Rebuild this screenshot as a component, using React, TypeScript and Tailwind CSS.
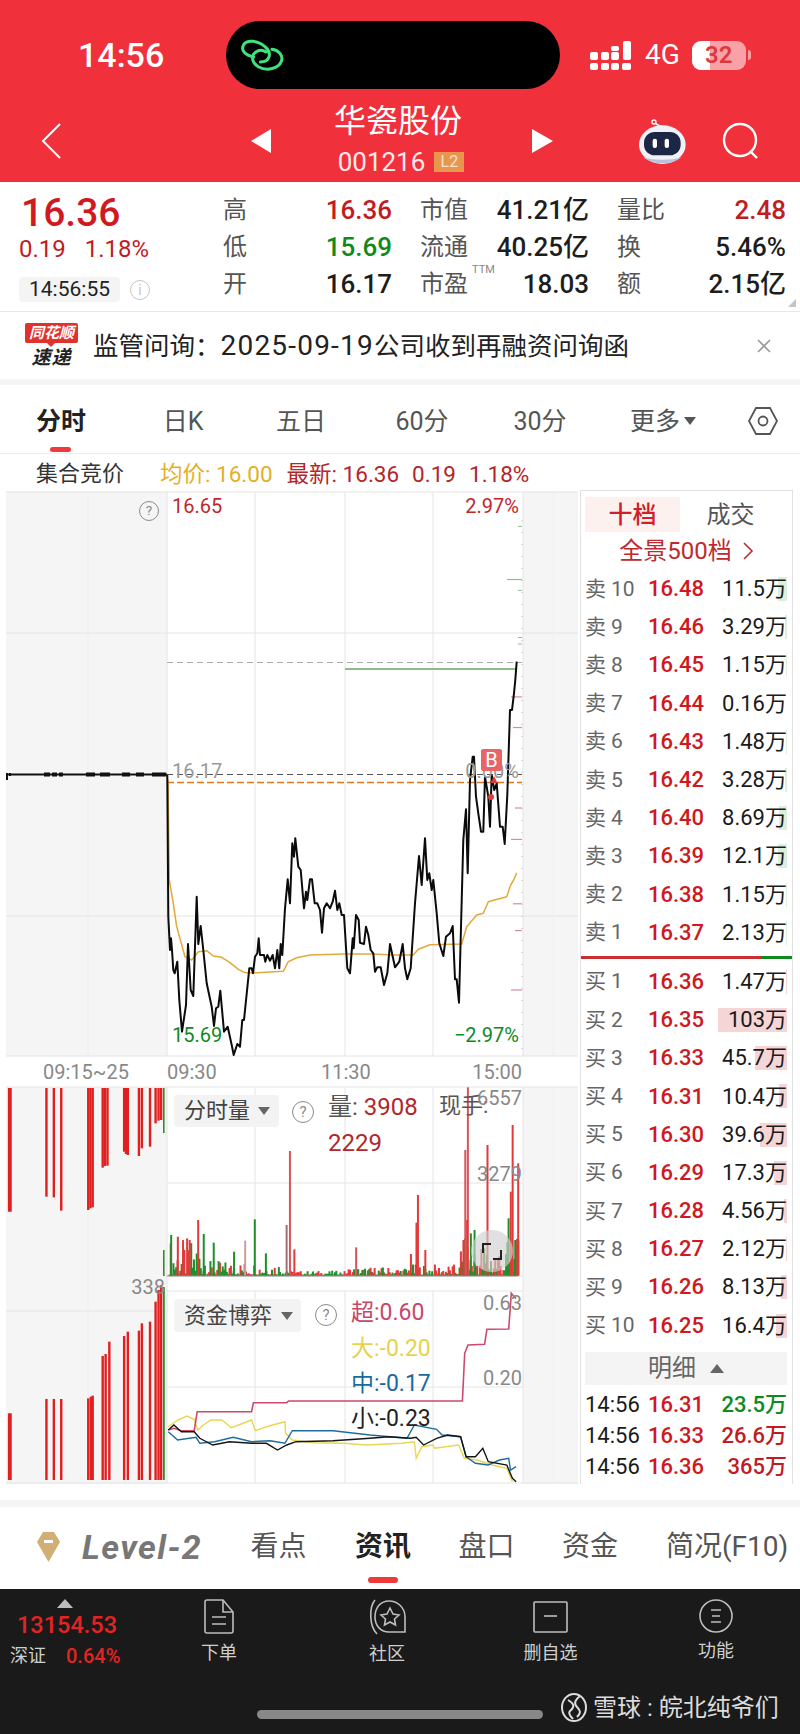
import React from 'react';

type Pt = [number, number];

const toLine = (pts: Pt[], fx: (x: number) => number, fy: (y: number) => number) =>
  pts.map(([x, y]) => `${fx(x).toFixed(1)},${fy(y).toFixed(1)}`).join(' ');

// traced from the chart: price and average lines
const priceTrace: Pt[] = [
  [22,405],[25,830],[30,930],[33,895],[36,930],[40,990],[44,1000],[52,965],[58,1080],[66,1175],[78,1095],[84,912],[92,1050],[100,1068],[110,770],[115,912],[122,858],[130,930],[140,1030],[155,1100],[162,1158],[168,1105],[175,1100],[181,1052],[192,1175],[203,1160],[215,1215],[221,1245],[232,1212],[240,1220],[247,1140],[252,1140],[268,985],[275,985],[279,1000],[285,950],[292,940],[296,895],[300,945],[312,945],[316,965],[322,945],[330,962],[338,945],[345,985],[352,930],[358,985],[362,912],[367,945],[375,805],[383,718],[390,790],[397,610],[402,650],[406,595],[415,680],[422,690],[432,805],[438,755],[442,780],[450,718],[456,718],[464,790],[472,790],[480,810],[486,878],[492,805],[500,790],[510,805],[518,785],[525,752],[532,810],[538,790],[545,825],[552,825],[562,985],[570,1000],[578,895],[581,925],[588,825],[596,840],[600,908],[612,912],[618,860],[625,885],[632,930],[640,940],[645,995],[652,982],[662,982],[672,1035],[682,1000],[690,912],[705,982],[718,965],[728,912],[735,985],[742,1018],[752,985],[765,790],[777,648],[785,735],[795,595],[802,720],[808,700],[815,750],[820,720],[830,820],[838,910],[850,948],[858,890],[870,880],[878,858],[885,1018],[890,1018],[897,1088],[910,600],[918,508],[923,700],[930,420],[938,350],[942,350],[948,470],[955,520],[963,575],[970,575],[975,410],[985,470],[990,560],[995,405],[1003,450],[1010,430],[1020,560],[1028,560],[1034,612],[1042,465],[1050,210],[1056,210],[1062,160],[1066,120],[1070,65],
];
const avgTrace: Pt[] = [
  [24,420],[28,720],[40,790],[50,860],[75,950],[95,960],[115,935],[140,932],[160,948],[185,952],[210,968],[235,988],[255,998],[290,998],[370,994],[385,965],[410,953],[450,945],[550,942],[640,942],[700,945],[760,945],[775,928],[810,914],[905,912],[920,860],[950,825],[970,820],[985,785],[1040,770],[1052,735],[1062,718],[1070,698],
];
const superTrace: Pt[] = [[455,1050],[470,1045],[490,1052],[525,1052],[533,995],[680,995],[685,968],[775,968],[780,963],[1250,963],[1256,820],[1265,795],[1310,793],[1316,748],[1375,747],[1382,640],[1390,650],[1395,655]];
const bigTrace: Pt[] = [[455,1040],[480,1020],[505,1008],[525,1018],[535,1050],[550,1035],[570,1020],[600,1020],[625,1043],[645,1035],[680,1020],[690,1052],[720,1040],[770,1025],[772,1060],[790,1080],[850,1088],[930,1090],[990,1095],[1085,1090],[1120,1085],[1125,1135],[1140,1100],[1170,1095],[1175,1105],[1240,1095],[1255,1135],[1290,1140],[1330,1155],[1370,1165],[1385,1205]];
const midTrace: Pt[] = [[455,1055],[480,1080],[530,1072],[540,1090],[580,1085],[630,1072],[680,1085],[730,1082],[770,1090],[790,1052],[900,1052],[1000,1065],[1100,1075],[1120,1035],[1180,1048],[1195,1065],[1245,1070],[1260,1130],[1285,1150],[1320,1155],[1350,1140],[1375,1135],[1380,1170],[1395,1160]];
const smallTrace: Pt[] = [[455,1050],[470,1035],[490,1055],[525,1055],[540,1075],[575,1095],[620,1085],[680,1090],[720,1090],[750,1110],[775,1095],[800,1085],[900,1082],[1000,1075],[1050,1070],[1110,1075],[1125,1072],[1145,1095],[1180,1075],[1210,1065],[1245,1070],[1260,1130],[1285,1130],[1305,1105],[1320,1145],[1370,1155],[1385,1195],[1395,1205]];

const frac = (n: number) => n - Math.floor(n);
const rnd = (i: number) => frac(Math.sin(i * 12.9898) * 43758.5453);

const RED = '#e23a3a';
const GREEN = '#1f8f2b';

const volBars: { x: number; top: number; c: string }[] = [];
for (let i = 0; i < 256; i++) {
  const x = 455 + i * 3.7;
  const cap = x < 560 ? 110 : x < 780 ? 42 : x < 930 ? 12 : x < 1100 ? 24 : x < 1240 ? 32 : 110;
  const r = rnd(i);
  volBars.push({ x, top: 587 - cap * r * r - 3, c: rnd(i + 500) < 0.55 ? GREEN : RED });
}
const spikes: [number, number, string][] = [
  [781,213,'#d9535a'],[772,435,'#a07070'],[1127,345,RED],[1123,428,RED],[960,502,'#d9535a'],[1262,22,'#d9535a'],[1255,210,'#d9535a'],[1315,195,RED],[1383,135,RED],[1378,335,RED],[1398,250,RED],[1250,480,RED],[1260,420,RED],[533,420,RED],[478,470,RED],[510,480,RED],[686,418,GREEN],[460,465,GREEN],[548,462,GREEN],[575,488,GREEN],[630,515,GREEN],[716,520,GREEN],[1280,450,GREEN],[1270,460,GREEN],[1372,415,GREEN],[1390,480,GREEN],[793,508,RED],[1108,522,RED],[1147,510,RED],[660,482,'#c9a0a0'],
];
spikes.forEach(([x, top, c]) => volBars.push({ x, top, c }));

// red columns in the auction zone, hanging from the top / standing on the bottom
const auctionVol: [number, number][] = [[24,395],[28,395],[125,350],[145,352],[165,392],[238,390],[244,385],[250,382],[277,263],[283,258],[290,257],[335,215],[340,222],[345,225],[375,228],[383,205],[405,200],[420,130],[428,122],[435,120]];
const auctionFund: [number, number][] = [[24,1000],[28,1000],[125,957],[145,957],[165,957],[238,955],[245,950],[250,947],[277,828],[285,822],[295,785],[335,768],[345,755],[375,752],[383,730],[405,725],[420,665],[428,630],[435,615]];

const tickRows = [540, 620, 830, 912, 1080, 1150, 1305];
const greenTicks = [95, 262, 385, 402];

const zx4 = (x: number) => x / 2.703;
const zy4 = (y: number) => 1080 + y / 3;

function ChartDrawing() {
  const z8x = (x: number) => 160 + x / 3;
  const z8y = (y: number) => 640 + y / 3;
  return (
    <svg className="absolute inset-0" width="581" height="994" viewBox="0 490 581 994" fill="none">
      <rect x="6" y="492" width="161" height="564" fill="#f5f5f5" />
      <rect x="523" y="492" width="55" height="564" fill="#f5f5f5" />
      <rect x="6" y="1087" width="161" height="397" fill="#f5f5f5" />
      <rect x="523" y="1087" width="55" height="397" fill="#f5f5f5" />

      {/* grid */}
      <g stroke="#e4e4e4" strokeWidth="1">
        <path d="M6 492H578M6 633H578M6 916H578M6 1056H578M6 1087H578M167 1183H523M167 1276H523M167 1291H523M6 1311H167M167 1387H523M6 1483H578" />
        <path d="M167 492V1056M255 492V1056M345 492V1056M433 492V1056M523 492V1056M167 1087V1483M255 1087V1276M345 1087V1276M433 1087V1276M523 1087V1483M255 1291V1483M345 1291V1483M433 1291V1483" />
        <path d="M88 492V1056M88 1087V1483M553 492V1056M553 1087V1483" stroke="#eeeeee" />
      </g>

      {/* right edge ticks */}
      <g stroke="#d98c9a" strokeWidth="1.2">
        {tickRows.map((y, i) => (
          <path key={y} d={`M${511 + (i % 3) * 2} ${490 + y / 2.61}H522`} />
        ))}
      </g>
      <path d="M507 579.5H522" stroke="#8fbf8f" strokeWidth="1.2" />
      <g stroke="#8fbf8f" strokeWidth="1">
        {greenTicks.map((y) => (
          <path key={y} d={`M518 ${490 + y / 2.61}H522`} />
        ))}
      </g>
      <path d="M522 520V1056" stroke="#b8b8b8" strokeWidth="1" strokeDasharray="1 11" />

      {/* reference lines */}
      <path d="M167 662.5H522" stroke="#aaaaaa" strokeWidth="1" strokeDasharray="6 4" />
      <path d="M345 669H516" stroke="#8fbb8a" strokeWidth="2" />
      <path d="M167 774.5H522" stroke="#555555" strokeWidth="1" strokeDasharray="6 4" />
      <path d="M167 782.5H522" stroke="#e07820" strokeWidth="1.6" strokeDasharray="7 3" />

      {/* pre-open flat line */}
      <path d="M7 774.5H167" stroke="#111111" strokeWidth="2" />
      <path d="M7 773V780M10 773V776" stroke="#111111" strokeWidth="2" />
      <path d="M44 774.5h6M52 774.5h5M59 774.5h4M86 774.5h9M100 774.5h10M122 774.5h8M136 774.5h8M152 774.5h14" stroke="#111111" strokeWidth="4" />

      <polyline points={toLine(avgTrace, z8x, z8y)} stroke="#e3a93b" strokeWidth="1.5" strokeLinejoin="round" />
      <polyline points={toLine(priceTrace, z8x, z8y)} stroke="#0b0b0b" strokeWidth="2" strokeLinejoin="round" />

      <circle cx="491" cy="797" r="3" fill="#e23a3a" />
      <path d="M494 776l3.5 7h-7z" fill="#e23a3a" />

      {/* volume */}
      {auctionVol.map(([x, b]) => (
        <rect key={x} x={zx4(x) - 1} y="1088" width="2.4" height={zy4(b) - 1088} fill="#e01f1f" />
      ))}
      <rect x="163" y="1088" width="1.6" height="45" fill="#2f8f2f" />
      <rect x="163" y="1250" width="1.6" height="26" fill="#2f8f2f" />
      {volBars.map((b, i) => (
        <rect key={i} x={zx4(b.x)} y={zy4(b.top)} width="2" height={zy4(587) - zy4(b.top)} fill={b.c} />
      ))}
      <path d="M167 1276H518" stroke="#777777" strokeWidth="0.8" />

      {/* fund flow */}
      {auctionFund.map(([x, t]) => (
        <rect key={x} x={zx4(x) - 1} y={zy4(t)} width="2.4" height={zy4(1200) - zy4(t)} fill="#e01f1f" />
      ))}
      <rect x="163" y="1287" width="1.8" height="193" fill="#2f8f2f" />
      <polyline points={toLine(bigTrace, zx4, zy4)} stroke="#e8d750" strokeWidth="1.4" />
      <polyline points={toLine(superTrace, zx4, zy4)} stroke="#cb4a6c" strokeWidth="1.6" />
      <polyline points={toLine(midTrace, zx4, zy4)} stroke="#1f6c9e" strokeWidth="1.4" />
      <polyline points={toLine(smallTrace, zx4, zy4)} stroke="#151515" strokeWidth="1.4" />

      {/* expand button */}
      <circle cx="492" cy="1251" r="21" fill="#cfcfcf" fillOpacity="0.65" />
      <path d="M483 1253v-9h8M501 1250v9h-8" stroke="#222222" strokeWidth="2" />
    </svg>
  );
}

function Help({ className, size = 20 }: { className: string; size?: number }) {
  return (
    <span
      className={`absolute flex items-center justify-center rounded-full border-[1.5px] border-[#8a8a8a] text-[#8a8a8a] ${className}`}
      style={{ width: size, height: size, fontSize: size * 0.68 }}
    >
      ?
    </span>
  );
}

function ChartPanel() {
  return (
    <div className="relative h-[994px] w-[580px] shrink-0 text-[20px] leading-none">
      <ChartDrawing />
      <Help className="left-[139px] top-[11px]" />
      <span className="absolute left-[172px] top-[6px] text-[#c0272d]">16.65</span>
      <span className="absolute right-[61px] top-[6px] text-[#c0272d]">2.97%</span>
      <span className="absolute left-[172px] top-[271px] text-[#999]">16.17</span>
      <span className="absolute right-[61px] top-[271px] text-[#999]">0.00%</span>
      <span className="absolute left-[481px] top-[259px] flex h-[22px] w-[21px] items-center justify-center rounded-[2px] bg-[#e86565] text-[20px] text-white">B</span>
      <span className="absolute left-[172px] top-[535px] text-[#0f8a1c]">15.69</span>
      <span className="absolute right-[61px] top-[535px] text-[#0f8a1c]">−2.97%</span>

      <span className="absolute left-[43px] top-[572px] text-[#888]">09:15~25</span>
      <span className="absolute left-[167px] top-[572px] text-[#888]">09:30</span>
      <span className="absolute left-[321px] top-[572px] text-[#888]">11:30</span>
      <span className="absolute right-[58px] top-[572px] text-[#888]">15:00</span>

      <div className="absolute left-[174px] top-[605px] flex h-[32px] w-[105px] items-center gap-[8px] rounded-[4px] bg-[#f3f3f3] pl-[10px] text-[22px] text-[#444]">
        分时量<span className="h-0 w-0 border-x-[6px] border-t-[8px] border-x-transparent border-t-[#666]" />
      </div>
      <Help className="left-[292px] top-[611px]" size={22} />
      <span className="absolute left-[328px] top-[605px] text-[24px] text-[#555]">量: <span className="text-[#b3262b]">3908</span></span>
      <span className="absolute left-[439px] top-[605px] text-[22px] text-[#555]">现手:</span>
      <span className="absolute left-[328px] top-[641px] text-[24px] text-[#b3262b]">2229</span>
      <span className="absolute right-[58px] top-[598px] text-[#888]">6557</span>
      <span className="absolute right-[58px] top-[674px] text-[#888]">3279</span>
      <span className="absolute right-[415px] top-[787px] text-[#888]">338</span>

      <div className="absolute left-[174px] top-[809px] flex h-[33px] w-[127px] items-center gap-[9px] rounded-[4px] bg-[#f3f3f3] pl-[10px] text-[22px] text-[#444]">
        资金博弈<span className="h-0 w-0 border-x-[6px] border-t-[8px] border-x-transparent border-t-[#666]" />
      </div>
      <Help className="left-[315px] top-[814px]" size={22} />
      <span className="absolute left-[351px] top-[811px] text-[23px] text-[#c8466a]">超:0.60</span>
      <span className="absolute left-[351px] top-[847px] text-[23px] text-[#e6d24e]">大:-0.20</span>
      <span className="absolute left-[351px] top-[882px] text-[23px] text-[#1a6aa0]">中:-0.17</span>
      <span className="absolute left-[351px] top-[917px] text-[23px] text-[#222]">小:-0.23</span>
      <span className="absolute right-[58px] top-[803px] text-[#888]">0.63</span>
      <span className="absolute right-[58px] top-[878px] text-[#888]">0.20</span>
    </div>
  );
}

type Level = { label: string; no: string; price: string; qty: string; bar?: number };

const asks: Level[] = [
  { label: '卖', no: '10', price: '16.48', qty: '11.5万', bar: 9 },
  { label: '卖', no: '9', price: '16.46', qty: '3.29万', bar: 2 },
  { label: '卖', no: '8', price: '16.45', qty: '1.15万', bar: 1 },
  { label: '卖', no: '7', price: '16.44', qty: '0.16万' },
  { label: '卖', no: '6', price: '16.43', qty: '1.48万', bar: 1 },
  { label: '卖', no: '5', price: '16.42', qty: '3.28万', bar: 2 },
  { label: '卖', no: '4', price: '16.40', qty: '8.69万', bar: 8 },
  { label: '卖', no: '3', price: '16.39', qty: '12.1万', bar: 9 },
  { label: '卖', no: '2', price: '16.38', qty: '1.15万', bar: 1 },
  { label: '卖', no: '1', price: '16.37', qty: '2.13万', bar: 1 },
];
const bids: Level[] = [
  { label: '买', no: '1', price: '16.36', qty: '1.47万', bar: 1 },
  { label: '买', no: '2', price: '16.35', qty: '103万', bar: 69 },
  { label: '买', no: '3', price: '16.33', qty: '45.7万', bar: 32 },
  { label: '买', no: '4', price: '16.31', qty: '10.4万', bar: 8 },
  { label: '买', no: '5', price: '16.30', qty: '39.6万', bar: 27 },
  { label: '买', no: '6', price: '16.29', qty: '17.3万', bar: 13 },
  { label: '买', no: '7', price: '16.28', qty: '4.56万', bar: 3 },
  { label: '买', no: '8', price: '16.27', qty: '2.12万', bar: 1 },
  { label: '买', no: '9', price: '16.26', qty: '8.13万', bar: 6 },
  { label: '买', no: '10', price: '16.25', qty: '16.4万', bar: 11 },
];
const ticks = [
  { time: '14:56', price: '16.31', qty: '23.5万', color: 'text-[#0f8a1c]' },
  { time: '14:56', price: '16.33', qty: '26.6万', color: 'text-[#c01c22]' },
  { time: '14:56', price: '16.36', qty: '365万', color: 'text-[#c01c22]' },
];

function LevelRow({ level, tone }: { level: Level; tone: 'ask' | 'bid' }) {
  return (
    <div className="relative flex h-[38.2px] items-center text-[21px] leading-none">
      {level.bar ? (
        <span
          className={`absolute right-0 top-[7px] h-[24px] ${tone === 'ask' ? 'bg-[#dcefdc]' : 'bg-[#f6d5d6]'}`}
          style={{ width: level.bar }}
        />
      ) : null}
      <span className="relative w-[63px] text-[#666]">
        {level.label}
        <span className="ml-[5px]">{level.no}</span>
      </span>
      <span className="relative text-[22px] font-medium text-[#cf1820]">{level.price}</span>
      <span className="relative ml-auto text-[22px] text-[#1a1a1a]">{level.qty}</span>
    </div>
  );
}

function DepthPanel() {
  return (
    <div className="flex h-[994px] w-[213px] shrink-0 flex-col border-x border-t border-[#e2e2e2] pt-[6px]">
      <div className="flex h-[35px] pl-[4px] pr-[5px] text-[24px] leading-none">
        <span className="flex w-[95px] items-center justify-center bg-[#fdf1ef] font-medium text-[#cf2027]">十档</span>
        <span className="flex flex-1 items-center justify-center pr-[6px] text-[#555]">成交</span>
      </div>
      <div className="flex h-[38px] items-center justify-center gap-[10px] text-[24px] leading-none text-[#bd2a30]">
        全景500档
        <svg width="12" height="20" viewBox="0 0 12 20" fill="none"><path d="M2 2l8 8-8 8" stroke="#bd2a30" strokeWidth="1.6" /></svg>
      </div>
      <div className="pl-[4px] pr-[5px]">
        {asks.map((l) => <LevelRow key={l.no} level={l} tone="ask" />)}
      </div>
      <div className="mt-[4px] flex h-[3px] shrink-0">
        <span className="w-[180px] bg-[#c9302f]" />
        <span className="flex-1 bg-[#0f8a1c]" />
      </div>
      <div className="mt-[4px] pl-[4px] pr-[5px]">
        {bids.map((l) => <LevelRow key={l.no} level={l} tone="bid" />)}
      </div>
      <div className="ml-[4px] mr-[5px] mt-[7px] flex h-[33px] shrink-0 items-center justify-center gap-[14px] bg-[#f4f4f4] text-[24px] leading-none text-[#666]">
        明细
        <span className="h-0 w-0 border-x-[7px] border-b-[9px] border-x-transparent border-b-[#666]" />
      </div>
      <div className="mt-[5px] pl-[4px] pr-[5px]">
        {ticks.map((t) => (
          <div key={t.qty} className="flex h-[31px] items-center text-[22px] leading-none">
            <span className="w-[63px] text-[#1a1a1a]">{t.time}</span>
            <span className="font-medium text-[#cf1820]">{t.price}</span>
            <span className={`ml-auto font-medium ${t.color}`}>{t.qty}</span>
          </div>
        ))}
      </div>
    </div>
  );
}

function StatRow({ label, value, color = 'text-[#1d1d1d]' }: { label: React.ReactNode; value: string; color?: string }) {
  return (
    <div className="flex h-[37px] items-center justify-between leading-none">
      <span className="relative text-[24px] text-[#555]">{label}</span>
      <span className={`text-[26px] font-medium ${color}`}>{value}</span>
    </div>
  );
}

function SignalIcon() {
  return (
    <svg width="42" height="29" viewBox="0 0 42 29" fill="#fff">
      {[0, 11, 21].map((x) => (
        <g key={x}>
          <rect x={x} y="22" width="8" height="7" rx="2" />
          <rect x={x} y="11" width="8" height="8" rx="2" />
        </g>
      ))}
      <rect x="21" y="5" width="8" height="5" rx="2" />
      <rect x="32" y="22" width="9" height="7" rx="2" />
      <rect x="33" y="0" width="8" height="19" rx="2" />
    </svg>
  );
}

function RobotIcon() {
  return (
    <svg width="66" height="54" viewBox="0 0 198 162" fill="none">
      <circle cx="72" cy="24" r="6" stroke="#fff" strokeWidth="4" />
      <path d="M76 28c8 6 14 8 20 8" stroke="#fff" strokeWidth="5" />
      <ellipse cx="97" cy="92" rx="70" ry="58" fill="#f1f2f8" />
      <path d="M40 130c30 24 84 24 114 0-30 10-84 10-114 0z" fill="#b9c3dd" />
      <rect x="42" y="54" width="110" height="70" rx="32" fill="#1c2745" />
      <rect x="68" y="74" width="13" height="28" rx="6" fill="#fff" />
      <rect x="104" y="74" width="13" height="28" rx="6" fill="#fff" />
    </svg>
  );
}

function Header() {
  return (
    <header className="bg-[#f0313b] text-white">
      <div className="flex h-[100px] items-center">
        <span className="ml-[78px] w-[148px] pt-[10px] text-[34px] font-medium leading-none">14:56</span>
        <div className="mb-[11px] mt-[21px] flex h-[68px] w-[334px] items-center rounded-[34px] bg-black pl-[6px]">
          <svg width="60" height="46" viewBox="0 0 180 138" fill="none" stroke="#3fe37c" strokeWidth="9" strokeLinecap="round">
            <path d="M65 75C40 70 25 55 35 38 45 22 80 25 100 45 120 62 115 90 85 90" />
            <path d="M120 52C140 55 155 70 148 88 140 110 105 118 80 105 58 92 55 68 75 58 85 52 95 55 102 60" />
          </svg>
        </div>
        <div className="ml-[30px] mt-[10px]"><SignalIcon /></div>
        <span className="ml-[13px] mt-[10px] text-[28px] leading-none">4G</span>
        <div className="relative ml-[12px] mt-[10px] flex h-[29px] w-[54px] items-center justify-center overflow-hidden rounded-[9px] bg-white/55 text-[24px] font-semibold leading-none text-[#e0363d]">
          <span className="absolute inset-y-0 left-0 w-[18px] bg-white" />
          <span className="relative">32</span>
        </div>
        <span className="ml-[2px] mt-[10px] h-[10px] w-[3px] rounded-r bg-white/55" />
      </div>
      <div className="flex h-[82px] items-center">
        <svg className="ml-[41px]" width="21" height="36" viewBox="0 0 21 36" fill="none"><path d="M19 1L2 18l17 17" stroke="#fff" strokeWidth="2" /></svg>
        <span className="ml-[189px] h-0 w-0 border-y-[12px] border-r-[20px] border-y-transparent border-r-white" />
        <div className="flex w-[261px] flex-col items-center pr-[7px] leading-none">
          <span className="text-[32px] leading-[32px]">华瓷股份</span>
          <div className="ml-[6px] mt-[10px] flex items-center gap-[9px]">
            <span className="text-[26px] leading-[30px] opacity-90">001216</span>
            <span className="flex h-[20px] w-[30px] items-center justify-center bg-[#e8964e] text-[16px] text-[#fbe3c8]">L2</span>
          </div>
        </div>
        <span className="h-0 w-0 border-y-[12px] border-l-[21px] border-y-transparent border-l-white" />
        <div className="ml-[77px]"><RobotIcon /></div>
        <svg className="ml-[26px]" width="38" height="38" viewBox="0 0 38 38" fill="none"><circle cx="18" cy="18" r="16" stroke="#fff" strokeWidth="2.4" /><path d="M28 29l7 7" stroke="#fff" strokeWidth="2.4" /></svg>
      </div>
    </header>
  );
}

function Quote() {
  return (
    <section className="relative flex h-[130px] border-b border-[#e8e8e8]">
      <div className="w-[223px] shrink-0 pl-[19px] pt-[12px]">
        <div className="pl-[2px] text-[39px] font-medium leading-[38px] text-[#d01a1f]">16.36</div>
        <div className="mt-[3px] flex gap-[19px] text-[24px] leading-[28px] text-[#c01c22]">
          <span>0.19</span>
          <span>1.18%</span>
        </div>
        <div className="mt-[14px] flex items-center gap-[10px]">
          <span className="flex h-[25px] w-[101px] items-center justify-center rounded-[4px] bg-[#f4f4f4] text-[21px] leading-none text-[#222]">14:56:55</span>
          <span className="flex h-[20px] w-[20px] items-center justify-center rounded-full border-[1.5px] border-[#c4c4c4] text-[14px] leading-none text-[#c4c4c4]">i</span>
        </div>
      </div>
      <div className="grid w-[563px] grid-cols-3 gap-x-[28px] pt-[9px]">
        <div>
          <StatRow label="高" value="16.36" color="text-[#c01c22]" />
          <StatRow label="低" value="15.69" color="text-[#0f8a1c]" />
          <StatRow label="开" value="16.17" />
        </div>
        <div>
          <StatRow label="市值" value="41.21亿" />
          <StatRow label="流通" value="40.25亿" />
          <StatRow
            label={<>市盈<span className="absolute left-[52px] top-[-8px] text-[11px] text-[#888]">TTM</span></>}
            value="18.03"
          />
        </div>
        <div>
          <StatRow label="量比" value="2.48" color="text-[#c01c22]" />
          <StatRow label="换" value="5.46%" />
          <StatRow label="额" value="2.15亿" />
        </div>
      </div>
      <span className="absolute bottom-[4px] right-[4px] h-0 w-0 border-b-[8px] border-l-[8px] border-b-[#c4c4c4] border-l-transparent" />
    </section>
  );
}

function Notice() {
  return (
    <section className="flex h-[73px] items-center border-b-[6px] border-[#f5f5f5]">
      <div className="ml-[25px] flex w-[53px] flex-col items-center">
        <span className="relative flex h-[20px] w-[53px] items-center justify-center rounded-[2px] bg-[#e0322c] text-[15px] font-bold italic leading-none text-white">
          同花顺
          <span className="absolute -bottom-[4px] left-[22px] h-0 w-0 border-x-[4px] border-t-[4px] border-x-transparent border-t-[#e0322c]" />
        </span>
        <span className="mt-[5px] text-[19px] font-bold italic leading-[20px] tracking-[1px] text-[#222]">速递</span>
      </div>
      <span className="ml-[15px] text-[25.5px] leading-none text-[#222]">
        监管问询：<span className="text-[28px] tracking-[1.2px]">2025-09-19</span>公司收到再融资问询函
      </span>
      <svg className="ml-[127px]" width="16" height="16" viewBox="0 0 16 16" fill="none"><path d="M2 2l12 12M14 2L2 14" stroke="#999" strokeWidth="1.6" /></svg>
    </section>
  );
}

function PeriodTabs() {
  return (
    <nav className="flex h-[69px] items-center border-b border-[#ececec] text-[25px] leading-none text-[#555]">
      <span className="relative flex h-full w-[122px] items-center justify-center pt-[4px] font-bold text-[#222]">
        分时
        <span className="absolute bottom-[1px] left-[50px] h-[5px] w-[21px] rounded-full bg-[#ee3a3a]" />
      </span>
      <span className="flex w-[122px] justify-center pt-[4px]">日K</span>
      <span className="flex w-[114px] justify-center pt-[4px]">五日</span>
      <span className="flex w-[128px] justify-center pt-[4px]">60分</span>
      <span className="flex w-[108px] justify-center pt-[4px]">30分</span>
      <span className="flex w-[138px] items-center justify-center gap-[4px] pt-[4px]">
        更多<span className="h-0 w-0 border-x-[6px] border-t-[8px] border-x-transparent border-t-[#555]" />
      </span>
      <span className="flex w-[62px] justify-center pt-[4px]">
        <svg width="32" height="30" viewBox="0 0 32 30" fill="none" stroke="#555" strokeWidth="1.8">
          <path d="M9 2h14l7 13-7 13H9L2 15z" />
          <circle cx="16" cy="15" r="4.5" />
        </svg>
      </span>
    </nav>
  );
}

function AuctionBar() {
  return (
    <div className="flex h-[36px] items-center pl-[36px] pt-[4px] text-[22.5px] leading-none">
      <span className="text-[22px] text-[#333]">集合竞价</span>
      <span className="ml-[36px] text-[#e3b02a]">均价: 16.00</span>
      <span className="ml-[14px] text-[#b3262b]">最新: 16.36</span>
      <span className="ml-[13px] text-[#b3262b]">0.19</span>
      <span className="ml-[13px] text-[#b3262b]">1.18%</span>
    </div>
  );
}

function BottomTabs() {
  return (
    <nav className="flex h-[82px] items-center whitespace-nowrap pb-[2px] text-[28px] leading-none text-[#555]">
      <svg className="ml-[36px] shrink-0" width="25" height="32" viewBox="0 0 25 32">
        <path d="M7 1h11l6 10-11.500 20L1 11z" fill="#d2ad74" />
        <rect x="8" y="9" width="9" height="3" fill="#fff" />
      </svg>
      <span className="ml-[21px] w-[144px] shrink-0 text-[34px] font-bold italic tracking-[1.4px] text-[#777]">Level-2</span>
      <span className="flex w-[105px] shrink-0 justify-center">看点</span>
      <span className="relative flex w-[104px] shrink-0 justify-center font-bold text-[#222]">
        资讯
        <span className="absolute bottom-[-22px] left-[37px] h-[6px] w-[30px] rounded-full bg-[#ee3a3a]" />
      </span>
      <span className="flex w-[103px] shrink-0 justify-center">盘口</span>
      <span className="flex w-[104px] shrink-0 justify-center">资金</span>
      <span className="ml-[24px] shrink-0">简况(F10)</span>
    </nav>
  );
}

function Dock() {
  return (
    <footer className="relative h-[145px] bg-[#1a1a1a] text-[18px] leading-none text-[#cfcfcf]">
      <div className="flex pt-[10px]">
        <div className="flex w-[137px] shrink-0 flex-col pl-[10px]">
          <span className="ml-[47px] h-0 w-0 border-x-[8px] border-b-[9px] border-x-transparent border-b-[#bdbdbd]" />
          <span className="ml-[7px] mt-[6px] text-[23.500px] font-medium text-[#e42323]">13154.53</span>
          <div className="mt-[8px] flex items-center">
            <span>深证</span>
            <span className="ml-[20px] text-[20px] font-medium text-[#e42323]">0.64%</span>
          </div>
        </div>
        <div className="flex w-[164px] shrink-0 flex-col items-center gap-[10px]">
          <svg width="32" height="35" viewBox="0 0 32 35" fill="none" stroke="#bdbdbd" strokeWidth="1.6">
            <path d="M2 3a2 2 0 012-2h16l10 12v19a2 2 0 01-2 2H4a2 2 0 01-2-2z" />
            <path d="M20 1v12h10M9 18h14M9 25h14" />
          </svg>
          <span>下单</span>
        </div>
        <div className="flex w-[172px] shrink-0 flex-col items-center gap-[10px]">
          <svg width="39" height="36" viewBox="0 0 39 36" fill="none" stroke="#bdbdbd" strokeWidth="1.6">
            <path d="M7 1C1 8 1 27 9 35" />
            <path d="M7 18C7 8 13 2 21 2c8 0 16 6 16 16v15H21C13 33 7 27 7 18z" />
            <path d="M22 9l3 6 6 1-4.500 4 1 6-5.500-3-5.500 3 1-6L13 16l6-1z" />
          </svg>
          <span>社区</span>
        </div>
        <div className="flex w-[155px] shrink-0 flex-col items-center gap-[11px] pt-[2px]">
          <svg width="35" height="32" viewBox="0 0 35 32" fill="none" stroke="#bdbdbd" strokeWidth="1.6">
            <rect x="1" y="1" width="33" height="30" rx="1" />
            <path d="M11 15h13" />
          </svg>
          <span>删自选</span>
        </div>
        <div className="flex flex-1 flex-col items-center gap-[9px] pl-[4px]">
          <svg width="34" height="34" viewBox="0 0 34 34" fill="none" stroke="#bdbdbd" strokeWidth="1.6">
            <circle cx="17" cy="17" r="16" />
            <path d="M12 11h10M13 17h8M12 23h10" />
          </svg>
          <span>功能</span>
        </div>
      </div>
      <span className="absolute bottom-[15px] left-[257px] h-[9px] w-[286px] rounded-full bg-[#888]" />
      <div className="absolute bottom-[12px] left-[561px] flex items-center gap-[6px] text-[24px] text-[#dcdcdc]">
        <svg width="26" height="29" viewBox="0 0 26 29" fill="none" stroke="#dcdcdc" strokeWidth="2">
          <ellipse cx="13" cy="14.500" rx="12" ry="13.500" />
          <path d="M7 7C12 10 15 13 9 18 7 20 9 23 12 26M19 3C15 6 12 10 16 14 20 18 20 20 16 24" />
        </svg>
        <span>雪球 : 皖北纯爷们</span>
      </div>
    </footer>
  );
}

export default function App() {
  return (
    <div className="h-[1734px] w-[800px] overflow-hidden bg-white font-['Roboto','Noto_Sans_CJK_SC',sans-serif]">
      <Header />
      <Quote />
      <Notice />
      <PeriodTabs />
      <AuctionBar />
      <section className="flex h-[994px]">
        <ChartPanel />
        <DepthPanel />
      </section>
      <div className="h-[16px]" />
      <div className="h-[7px] bg-[#f5f5f5]" />
      <BottomTabs />
      <Dock />
    </div>
  );
}
